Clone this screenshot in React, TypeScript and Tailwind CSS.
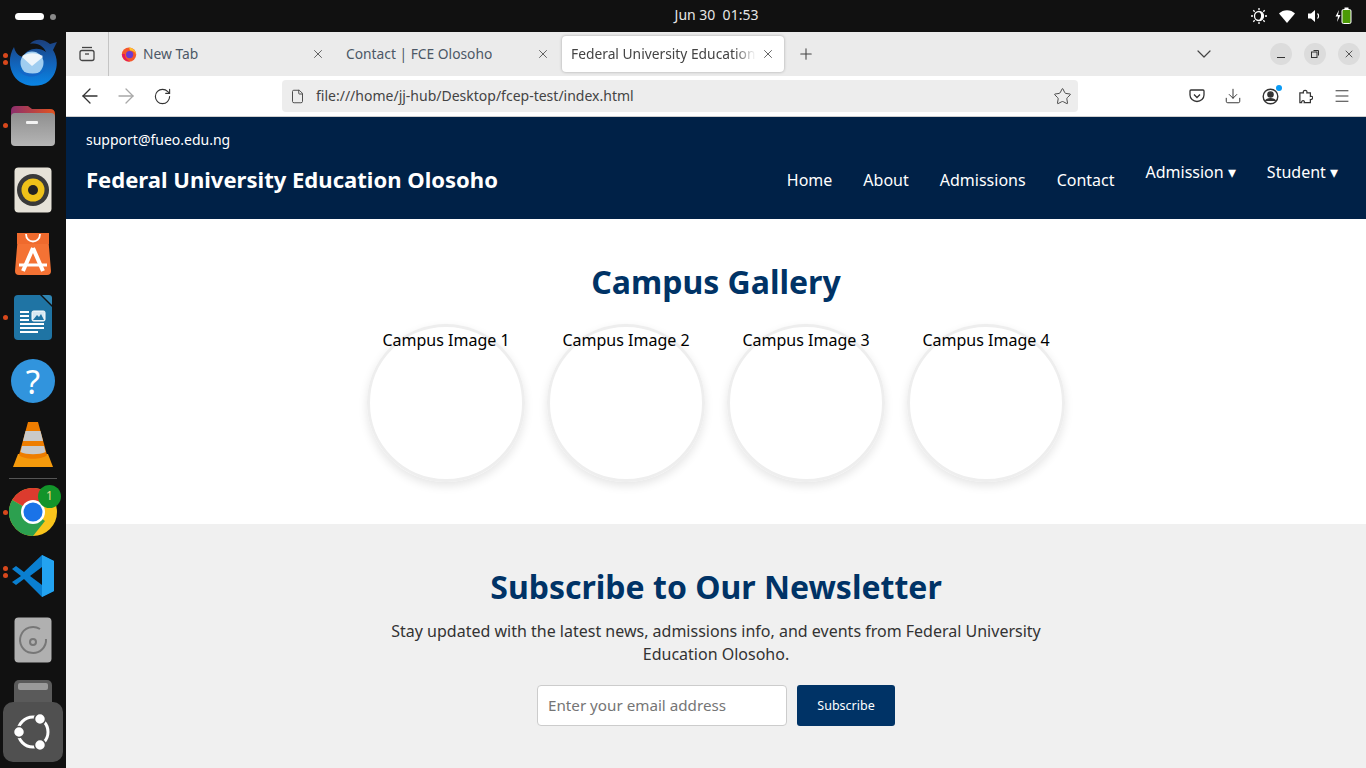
import { ArrowLeft, ArrowRight, RotateCw, File, Star, Download, Menu, X, Plus, ChevronDown } from 'lucide-react';

const uiFont = 'font-["Noto_Sans",sans-serif]';

function Dots({ n, top }: { n: number; top: number }) {
  return (
    <div className="absolute left-[3px] flex flex-col gap-[2px]" style={{ top }}>
      {Array.from({ length: n }).map((_, i) => (
        <span key={i} className="block w-[5px] h-[5px] rounded-full bg-[#d8481c]" />
      ))}
    </div>
  );
}

function Thunderbird() {
  return (
    <svg width="50" height="48" viewBox="0 0 50 48">
      <defs>
        <linearGradient id="tb" x1="0" y1="0" x2="0" y2="1">
          <stop offset="0" stopColor="#1c3f7c" />
          <stop offset="0.5" stopColor="#1262b8" />
          <stop offset="1" stopColor="#0a86e6" />
        </linearGradient>
      </defs>
      <path d="M6 8 C1 16 0 28 6 37 C13 48 31 50 41 42 C50 34 51 20 45 11 L49 3 L42 5 C36 0 27 -1 22 5 C30 3 36 8 38 13 C30 7 18 10 15 18 C10 17 7 13 6 8Z" fill="url(#tb)" />
      <circle cx="24" cy="24" r="11.5" fill="#9fcdf0" />
      <path d="M14 18 L24 27 L35 18 C31 13 18 13 14 18Z" fill="#edf5fb" />
      <path d="M10 30 C16 40 30 40 38 30 C30 36 20 36 10 30Z" fill="#1467c8" />
    </svg>
  );
}

function Files() {
  return (
    <svg width="46" height="42" viewBox="0 0 46 42">
      <defs>
        <linearGradient id="fl" x1="0" y1="0" x2="1" y2="0">
          <stop offset="0" stopColor="#8c2f6d" />
          <stop offset="1" stopColor="#e2541f" />
        </linearGradient>
        <linearGradient id="fg" x1="0" y1="0" x2="0" y2="1">
          <stop offset="0" stopColor="#8f8f8f" />
          <stop offset="1" stopColor="#b5b5b5" />
        </linearGradient>
      </defs>
      <path d="M1 6 Q1 1 6 1 H18 L22 4 H40 Q45 4 45 9 V20 H1Z" fill="url(#fl)" />
      <rect x="1" y="8" width="44" height="33" rx="4" fill="url(#fg)" />
      <rect x="16" y="16" width="12" height="3" rx="1" fill="#f2f2f2" />
    </svg>
  );
}

function Rhythmbox() {
  return (
    <svg width="38" height="46" viewBox="0 0 38 46">
      <rect x="0.5" y="0.5" width="37" height="45" rx="4" fill="#e6e2d8" />
      <circle cx="19" cy="23" r="16" fill="#3a3a3a" />
      <circle cx="19" cy="23" r="11.5" fill="#eec119" />
      <circle cx="19" cy="23" r="5" fill="#222" />
    </svg>
  );
}

function AppStore() {
  return (
    <svg width="36" height="42" viewBox="0 0 36 42">
      <path d="M3 2 Q3 0 5 0 H31 Q33 0 33 2 L36 38 Q36 42 32 42 H4 Q0 42 0 38Z" fill="#f47234" />
      <path d="M2 0 H34 L34 11 H2Z" fill="#ef6a2d" />
      <path d="M11 1 C11 11 25 11 25 1" fill="none" stroke="#fff" strokeWidth="1.8" />
      <path d="M18 15 L8 38 M18 15 L28 38" stroke="#fff" strokeWidth="4" fill="none" />
      <path d="M4 32 H32" stroke="#fff" strokeWidth="3" fill="none" />
    </svg>
  );
}

function Writer() {
  return (
    <svg width="38" height="46" viewBox="0 0 38 46">
      <path d="M4 0 H26 L38 12 V41 Q38 45 34 45 H4 Q0 45 0 41 V4 Q0 0 4 0Z" fill="#1f74a4" />
      <path d="M28 0 H35 Q38 0 38 3 V10Z" fill="#2f86b4" />
      <path d="M6 17 H15 M6 21 H15 M6 25 H15 M6 29 H30 M6 33 H30 M6 37 H24" stroke="#fff" strokeWidth="1.8" />
      <rect x="18" y="16" width="13" height="10" rx="1.5" fill="#d8e8f2" stroke="#fff" />
      <path d="M19 25 L23 20 L25 22 L27 19 L30 25Z" fill="#1f74a4" />
    </svg>
  );
}

function Help() {
  return (
    <div className={`w-[44px] h-[44px] rounded-full bg-[#3194dd] flex items-center justify-center text-white text-[33px] leading-none ${uiFont}`}>?</div>
  );
}

function Vlc() {
  return (
    <svg width="42" height="48" viewBox="0 0 42 48">
      <path d="M6 33 H36 L41 46 H1Z" fill="#f59a0c" />
      <path d="M16 1 H26 L35 34 C30 39 12 39 7 34Z" fill="#ee7d00" />
      <path d="M13.5 10 H28.5 L31 20 H11Z" fill="#c9c9c9" />
      <path d="M10 25 H32 L33.5 31 C28 34 14 34 8.5 31Z" fill="#c9c9c9" />
    </svg>
  );
}

function Chrome() {
  return (
    <div className="relative w-[48px] h-[48px]">
      <svg width="48" height="48" viewBox="0 0 48 48">
        <circle cx="24" cy="24" r="24" fill="#f9c41c" />
        <path d="M24 24 L3.2 12 A24 24 0 0 1 44.8 12Z" fill="#dc3b2e" />
        <path d="M24 24 L3.2 12 A24 24 0 0 0 24 48 L36 33Z" fill="#2ca04f" />
        <circle cx="24" cy="24" r="12" fill="#fff" />
        <circle cx="24" cy="24" r="9.5" fill="#1a73e8" />
      </svg>
      <div className={`absolute -top-[3px] -right-[4px] w-[23px] h-[23px] rounded-full bg-[#12942a] text-[#e9d98a] text-[12px] flex items-center justify-center ${uiFont}`}>1</div>
    </div>
  );
}

function VsCode() {
  return (
    <svg width="44" height="44" viewBox="0 0 44 44">
      <path d="M31 1 L43 7 V37 L31 43 L13 25 L5 31 L1 28 L10 22 L1 15 L5 12 L13 18Z" fill="#0a7fd0" />
      <path d="M31 1 L43 7 V37 L31 43 Z" fill="#23a3f0" />
      <path d="M31 13 L19 22 L31 31Z" fill="#111" />
    </svg>
  );
}

function DiscIcon() {
  return (
    <svg width="38" height="46" viewBox="0 0 38 46">
      <rect x="0.5" y="0.5" width="37" height="45" rx="4" fill="#b0b0b0" />
      <path d="M26 12 A13 13 0 1 0 32 22" fill="none" stroke="#777" strokeWidth="2" />
      <circle cx="19" cy="25" r="3" fill="none" stroke="#777" strokeWidth="2" />
    </svg>
  );
}

function UbuntuLogo() {
  return (
    <svg width="38" height="38" viewBox="0 0 38 38">
      <circle cx="19" cy="19" r="15" fill="none" stroke="#fff" strokeWidth="3" />
      <circle cx="26" cy="6" r="5.5" fill="#fff" stroke="#505050" strokeWidth="1.5" />
      <circle cx="5" cy="19" r="5.5" fill="#fff" stroke="#505050" strokeWidth="1.5" />
      <circle cx="26" cy="32" r="5.5" fill="#fff" stroke="#505050" strokeWidth="1.5" />
    </svg>
  );
}

function Dock() {
  return (
    <aside className="w-[66px] h-[736px] shrink-0 bg-[#111111] flex flex-col items-center overflow-hidden relative">
      <div className="h-[62px] w-full relative flex items-center justify-center">
        <Dots n={2} top={21} />
        <Thunderbird />
      </div>
      <div className="h-[64px] w-full relative flex items-center justify-center">
        <Dots n={1} top={29} />
        <Files />
      </div>
      <div className="h-[64px] w-full flex items-center justify-center"><Rhythmbox /></div>
      <div className="h-[64px] w-full flex items-center justify-center"><AppStore /></div>
      <div className="h-[64px] w-full relative flex items-center justify-center">
        <Dots n={1} top={29} />
        <Writer />
      </div>
      <div className="h-[62px] w-full flex items-center justify-center"><Help /></div>
      <div className="h-[66px] w-full flex items-center justify-center"><Vlc /></div>
      <div className="w-[48px] h-px bg-[#555555]" />
      <div className="h-[65px] w-full relative flex items-center justify-center">
        <Dots n={1} top={31} />
        <Chrome />
      </div>
      <div className="h-[63px] w-full relative flex items-center justify-center">
        <Dots n={2} top={22} />
        <VsCode />
      </div>
      <div className="h-[66px] w-full flex items-center justify-center"><DiscIcon /></div>
      <div className="w-[38px] h-[30px] mt-[7px] rounded-t-[5px] bg-[#5a5a5a] flex justify-center pt-[3px]">
        <span className="block w-[30px] h-[7px] rounded-[2px] bg-[#9a9a9a]" />
      </div>
      <div className="absolute left-[3px] top-[670px] w-[60px] h-[60px] rounded-[10px] bg-[#505050] flex items-center justify-center">
        <UbuntuLogo />
      </div>
    </aside>
  );
}

function TopBar() {
  return (
    <div className={`h-8 bg-[#111111] relative flex items-center justify-center text-[#e6e6e6] text-[14px] ${uiFont}`}>
      <div className="absolute left-[15px] top-[13px] flex items-center gap-[6px]">
        <span className="block w-[29px] h-[7px] rounded-full bg-white" />
        <span className="block w-[6px] h-[6px] rounded-full bg-[#8a8a8a]" />
      </div>
      <span className="ml-[67px] mb-[3px] whitespace-pre">Jun 30  01:53</span>
      <div className="absolute right-[14px] top-[7px] flex items-center gap-[12px] text-white">
        <svg width="16" height="16" viewBox="0 0 16 16">
          <circle cx="8" cy="8" r="4.5" fill="none" stroke="#fff" strokeWidth="1.3" />
          <path d="M8 3.5 A4.5 4.5 0 0 1 8 12.5 A6 6 0 0 0 8 3.5Z" fill="#fff" />
          <path d="M8 0 V2 M8 14 V16 M0 8 H2 M14 8 H16 M2.3 2.3 L3.7 3.7 M12.3 12.3 L13.7 13.7 M2.3 13.7 L3.7 12.3 M12.3 3.7 L13.7 2.3" stroke="#fff" strokeWidth="1.3" />
        </svg>
        <svg width="16" height="13" viewBox="0 0 16 13"><path d="M0 3.5 C4 -1 12 -1 16 3.5 L8 13Z" fill="#fff" /></svg>
        <svg width="16" height="16" viewBox="0 0 16 16">
          <path d="M1 5.5 H4 L8 2 V14 L4 10.5 H1Z" fill="#fff" />
          <path d="M10.5 5.5 A3.5 3.5 0 0 1 10.5 10.5" fill="none" stroke="#fff" strokeWidth="1.2" />
        </svg>
        <svg width="17" height="18" viewBox="0 0 17 18">
          <path d="M4 3 L0.5 9.5 H3 L2 15 L5.5 8 H3Z" fill="#fff" />
          <rect x="7" y="2.5" width="9" height="14" rx="1.5" fill="#4c9a06" stroke="#fff" />
          <rect x="9.5" y="0.5" width="4" height="2" fill="#fff" />
        </svg>
      </div>
    </div>
  );
}

function FirefoxIcon() {
  return (
    <svg width="16" height="16" viewBox="0 0 16 16">
      <circle cx="8" cy="8.6" r="7.2" fill="#f5572b" />
      <path d="M8 1.5 C12 2 15.5 5 15 9 C14.5 5.5 11 4.5 9 4.5Z" fill="#ffc02b" />
      <path d="M1 8 C1 12.5 5 15.8 9 15.5 C5 13.5 3.5 10.5 4 8Z" fill="#e3185f" />
      <circle cx="8.6" cy="8.6" r="3.6" fill="#6a3bd0" />
    </svg>
  );
}

function Tab({ title, active, icon, className }: { title: string; active?: boolean; icon?: boolean; className: string }) {
  return (
    <div className={`h-[36px] flex items-center relative ${active ? 'bg-white rounded-[4px] shadow-[0_0_3px_rgba(0,0,0,0.3)]' : ''} ${className}`}>
      {icon && <div className="ml-[10px] mr-[6px]"><FirefoxIcon /></div>}
      <span className={`whitespace-nowrap text-[13.8px] leading-[20px] overflow-hidden ${active ? 'ml-[9px] w-[185px] text-[#444444] [mask-image:linear-gradient(to_right,black_88%,transparent)]' : 'text-[#4c5866]'} ${!icon && !active ? 'ml-[7px]' : ''}`}>{title}</span>
      <X size={14} strokeWidth={1.4} className={`absolute top-[11px] text-[#444444] ${active ? 'right-[9px]' : 'right-[11px]'}`} />
    </div>
  );
}

function TabBar() {
  return (
    <div className={`h-[44px] bg-[#ebebeb] flex items-center relative ${uiFont}`}>
      <div className="w-[43px] h-[44px] border-r border-[#c4c4c4] flex items-center justify-center shrink-0">
        <svg width="16" height="16" viewBox="0 0 16 16" fill="none" stroke="#444" strokeWidth="1.3">
          <path d="M3 1.5 H13" />
          <rect x="1" y="4.5" width="14" height="10" rx="2" />
          <path d="M6 8 H10" />
        </svg>
      </div>
      <Tab title="New Tab" icon className="w-[225px] ml-[2px]" />
      <Tab title="Contact | FCE Olosoho" className="w-[222px] ml-[3px]" />
      <Tab title="Federal University Education Olosoho" active className="w-[222px] ml-[1px]" />
      <Plus size={18} strokeWidth={1.4} className="ml-[13px] text-[#444444]" />
      <ChevronDown size={24} strokeWidth={1.2} className="absolute left-[1126px] top-[10px] text-[#444444]" />
      <div className="absolute right-[6px] top-[11px] flex gap-[12px]">
        <div className="w-[22px] h-[22px] rounded-full bg-[#dcdcdc] flex items-center justify-center">
          <span className="block w-[8px] h-px bg-[#333333] mt-[6px]" />
        </div>
        <div className="w-[22px] h-[22px] rounded-full bg-[#dcdcdc] flex items-center justify-center">
          <svg width="10" height="10" viewBox="0 0 10 10" fill="none" stroke="#333" strokeWidth="1">
            <rect x="1.5" y="3" width="5.5" height="5.5" />
            <path d="M3.5 1.5 H8.5 V6.5" />
          </svg>
        </div>
        <div className="w-[22px] h-[22px] rounded-full bg-[#dcdcdc] flex items-center justify-center">
          <X size={12} strokeWidth={1.6} className="text-[#333333]" />
        </div>
      </div>
    </div>
  );
}

function NavBar() {
  return (
    <div className={`h-[41px] bg-white border-b border-[#cfcfcf] flex items-center relative ${uiFont}`}>
      <div className="flex items-center">
        <ArrowLeft size={24} strokeWidth={1.3} className="ml-[12px] text-[#333333]" />
        <ArrowRight size={24} strokeWidth={1.3} className="ml-[12px] text-[#a8a8a8]" />
        <RotateCw size={19} strokeWidth={1.4} className="ml-[15px] text-[#333333]" />
      </div>
      <div className="absolute left-[216px] top-[4px] w-[796px] h-[32px] rounded-[4px] bg-[#ededed] flex items-center">
        <File size={15} strokeWidth={1.5} className="ml-[8px] text-[#444444]" />
        <span className="ml-[11px] mb-[1px] text-[14px] text-[#444444]">file:///home/jj-hub/Desktop/fcep-test/index.html</span>
        <Star size={19} strokeWidth={1.2} className="ml-auto mr-[6px] text-[#444444]" />
      </div>
      <div className="absolute right-0 top-0 h-[40px] flex items-center text-[#333333]">
        <svg width="16" height="16" viewBox="0 0 16 16" fill="none" stroke="#333" strokeWidth="1.3">
          <path d="M2 2 H14 Q15 2 15 3 V7 A7 6.5 0 0 1 1 7 V3 Q1 2 2 2Z" />
          <path d="M5 6.5 L8 9.5 L11 6.5" />
        </svg>
        <Download size={18} strokeWidth={1.3} className="ml-[19px]" />
        <div className="relative ml-[20px] w-[17px] h-[17px]">
          <svg width="17" height="17" viewBox="0 0 17 17" fill="none" stroke="#333" strokeWidth="1.4">
            <circle cx="8.5" cy="8.5" r="7.3" />
            <circle cx="8.5" cy="6.5" r="2.6" fill="#333" />
            <path d="M3.5 13 C5 10 12 10 13.5 13" fill="#333" />
          </svg>
          <span className="absolute -top-[3px] -right-[3px] w-[6px] h-[6px] rounded-full bg-[#0a9bf5]" />
        </div>
        <svg width="14" height="16" viewBox="0 0 16 17" fill="none" stroke="#333" strokeWidth="1.4" className="ml-[20px]">
          <path d="M1 5 H5 C4 1 10 1 9 5 H13 V9 C16.5 8 16.5 13 13 12.5 V16 H6 C7 13 2.5 13 3 16 H1Z" />
        </svg>
        <Menu size={18} strokeWidth={1.3} className="ml-[20px] mr-[15px]" />
      </div>
    </div>
  );
}

function SiteHeader() {
  return (
    <header className="h-[102px] bg-[#002147] text-white px-[20px] pt-[12px]">
      <p className="text-[14px] leading-[22px]">support@fueo.edu.ng</p>
      <div className="flex items-start justify-between mt-[8px]">
        <h1 className="text-[22.05px] font-bold leading-[40px]">Federal University Education Olosoho</h1>
        <nav className="flex items-start text-[16px] leading-[22px] mr-[8px] -mt-[2px]">
          <a className="mt-[12px]">Home</a>
          <a className="mt-[12px] ml-[31px]">About</a>
          <a className="mt-[12px] ml-[31px]">Admissions</a>
          <a className="mt-[12px] ml-[31px]">Contact</a>
          <a className="mt-[4px] ml-[31px]">Admission ▾</a>
          <a className="mt-[4px] ml-[31px]">Student ▾</a>
        </nav>
      </div>
    </header>
  );
}

function Gallery() {
  return (
    <section className="h-[305px] bg-white flex flex-col items-center pt-[40px]">
      <h2 className="text-[32px] font-bold leading-[46px] text-[#003366]">Campus Gallery</h2>
      <div className="flex gap-[22px] mt-[19px]">
        {[1, 2, 3, 4].map(n => (
          <div key={n} className="w-[158px] h-[158px] rounded-full border-[3px] border-[#eeeeee] shadow-[0_4px_10px_rgba(0,0,0,0.1)] flex justify-center pt-[1px]">
            <span className="whitespace-nowrap text-[16px] leading-[22px] h-[22px] mt-[1px] text-black">Campus Image {n}</span>
          </div>
        ))}
      </div>
    </section>
  );
}

function Newsletter() {
  return (
    <section className="flex-1 bg-[#f0f0f0] flex flex-col items-center pt-[40px]">
      <h2 className="text-[32px] font-bold leading-[46px] text-[#003366]">Subscribe to Our Newsletter</h2>
      <p className="w-[680px] text-center text-[16px] leading-[23px] text-[#333333] mt-[10px]">
        Stay updated with the latest news, admissions info, and events from Federal University Education Olosoho.
      </p>
      <div className="flex gap-[10px] mt-[19px]">
        <input
          placeholder="Enter your email address"
          className="w-[250px] h-[41px] bg-white border border-[#cccccc] rounded-[4px] px-[10px] pb-[2px] text-[15.2px] placeholder:text-[#757575] outline-none"
        />
        <button className="w-[98px] h-[41px] bg-[#003366] rounded-[3px] pt-[2px] text-white text-[12.5px]">Subscribe</button>
      </div>
    </section>
  );
}

export default function App() {
  return (
    <div className='w-[1366px] h-[768px] overflow-hidden flex flex-col font-["Noto_Sans",sans-serif]'>
      <TopBar />
      <div className="flex flex-1 min-h-0">
        <Dock />
        <div className="flex-1 flex flex-col min-w-0">
          <TabBar />
          <NavBar />
          <main className="flex-1 flex flex-col min-h-0">
            <SiteHeader />
            <Gallery />
            <Newsletter />
          </main>
        </div>
      </div>
    </div>
  );
}
